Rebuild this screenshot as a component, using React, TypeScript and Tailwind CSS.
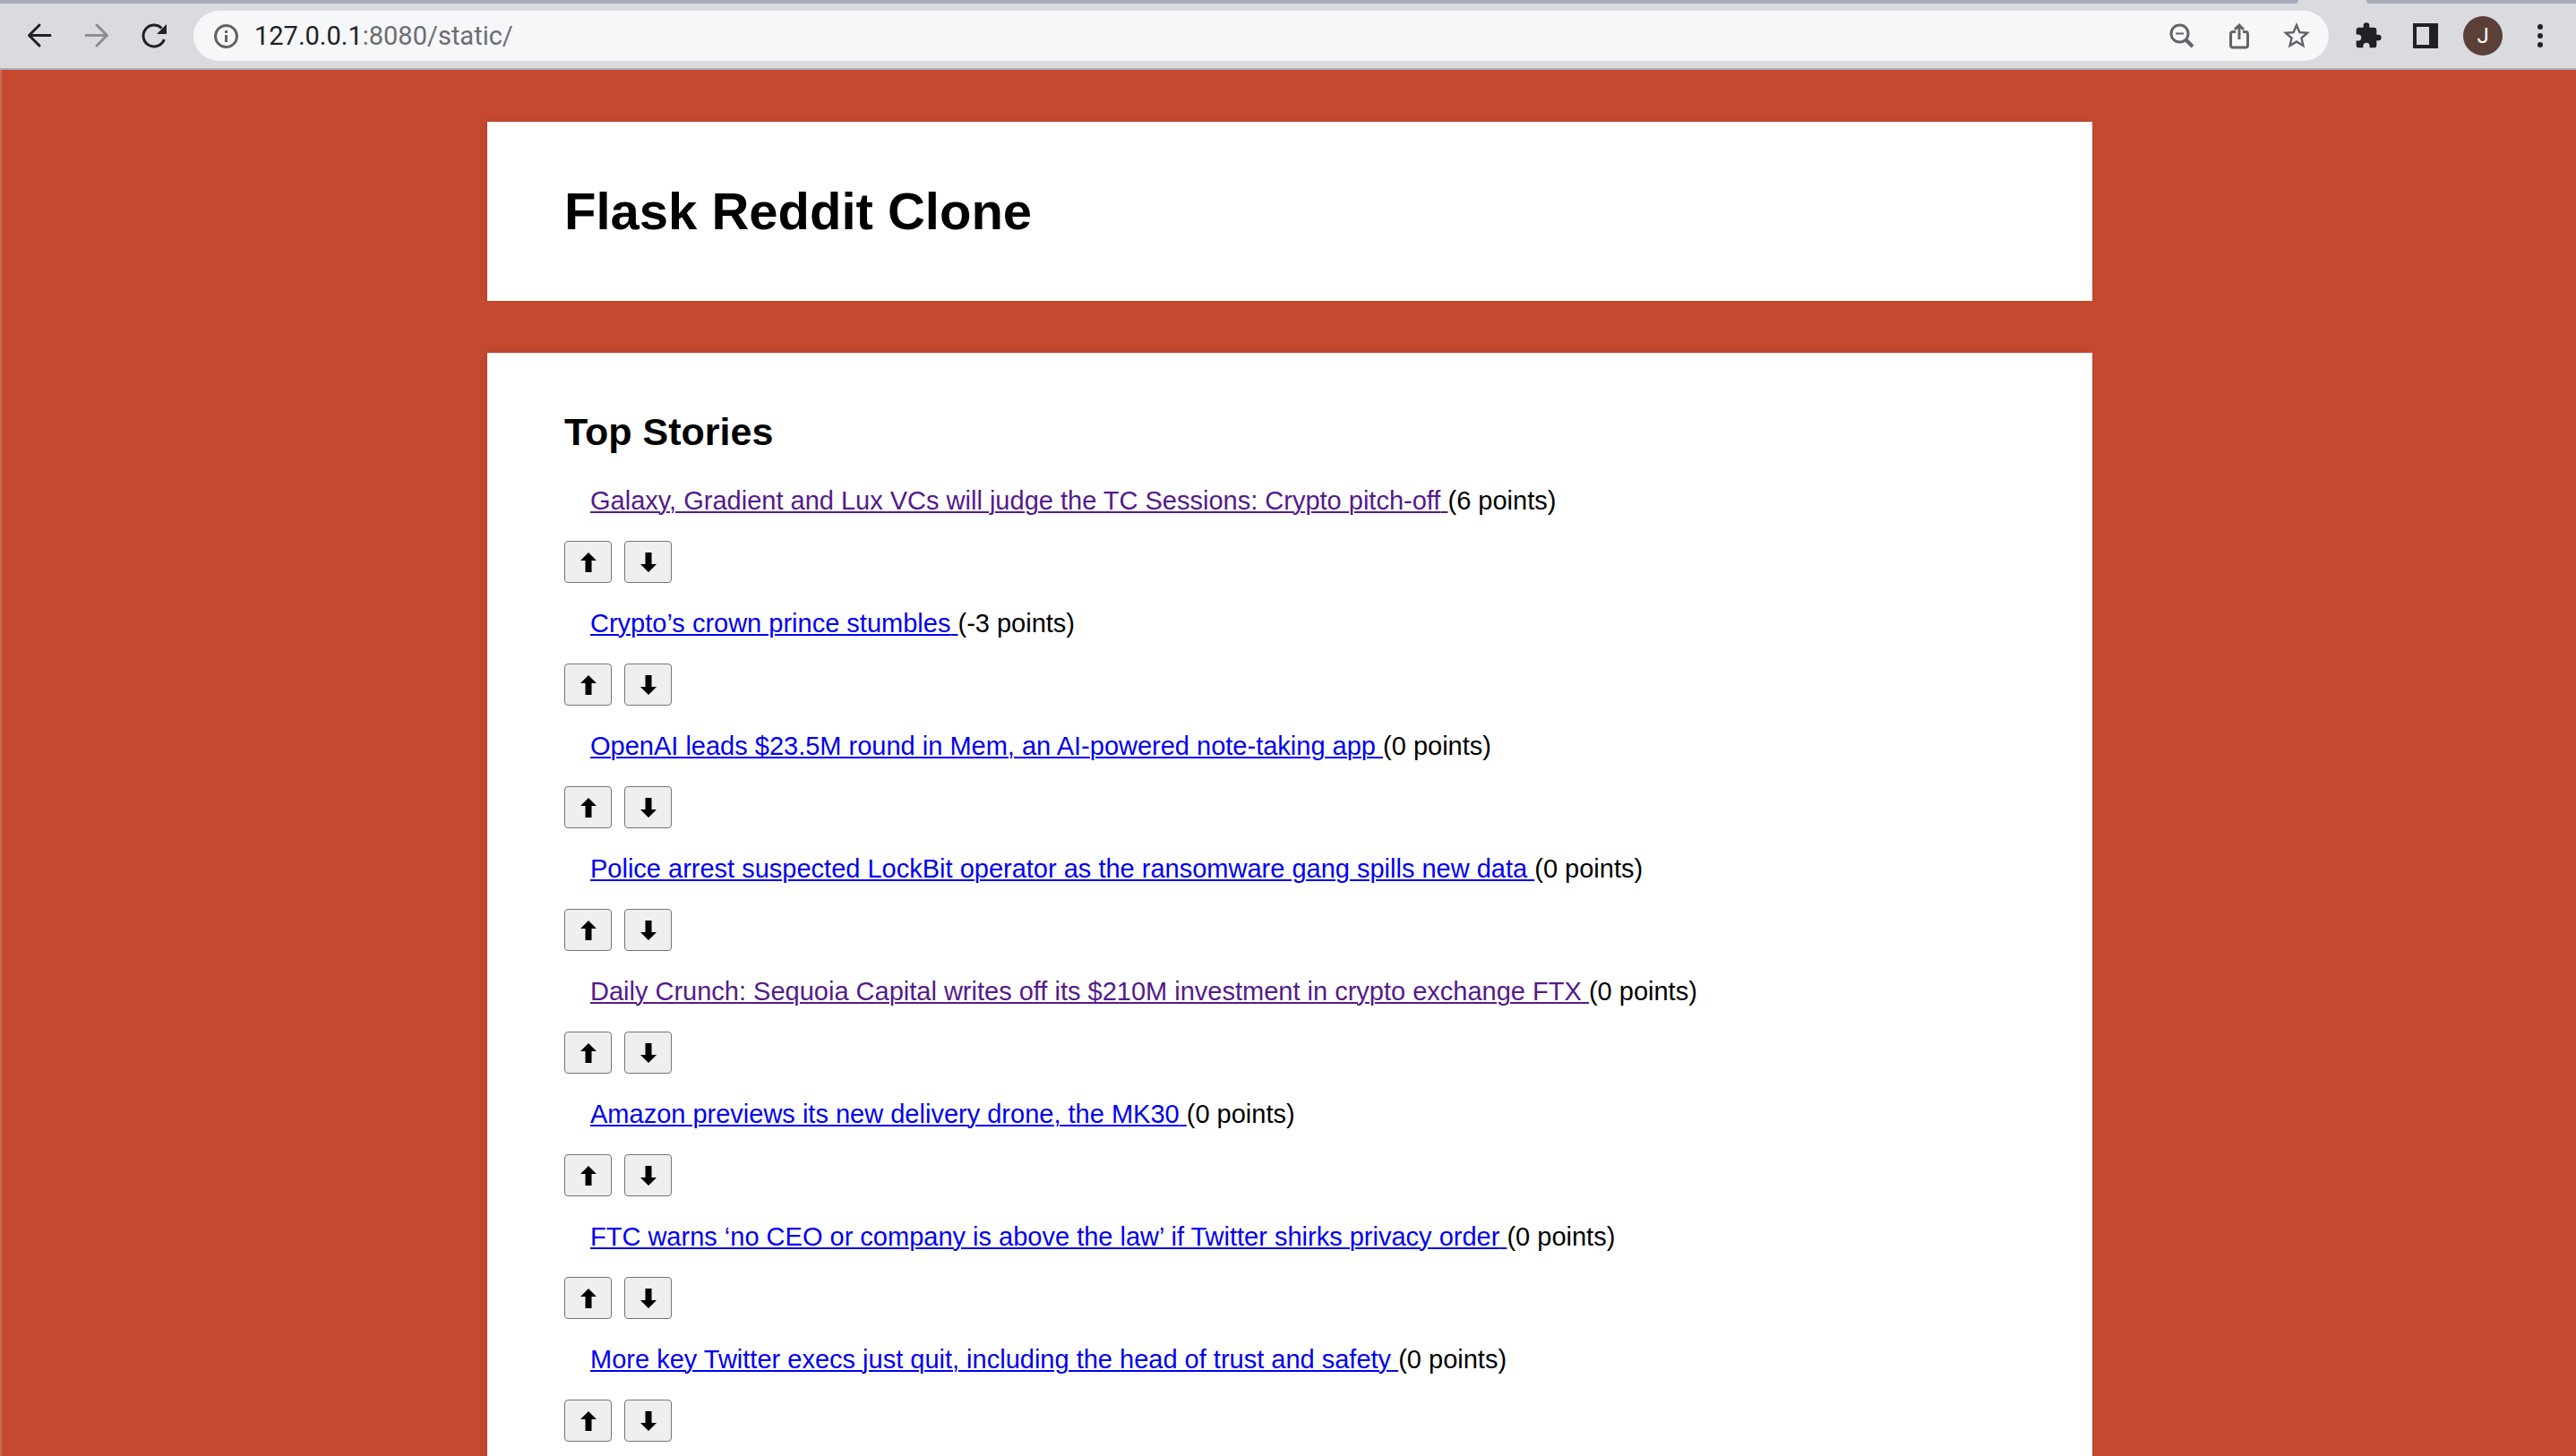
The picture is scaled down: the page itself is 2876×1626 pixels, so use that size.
import React from "react";

type Story = { title: string; points: number; visited?: boolean };

const stories: Story[] = [
  { title: "Galaxy, Gradient and Lux VCs will judge the TC Sessions: Crypto pitch-off", points: 6, visited: true },
  { title: "Crypto’s crown prince stumbles", points: -3 },
  { title: "OpenAI leads $23.5M round in Mem, an AI-powered note-taking app", points: 0 },
  { title: "Police arrest suspected LockBit operator as the ransomware gang spills new data", points: 0 },
  { title: "Daily Crunch: Sequoia Capital writes off its $210M investment in crypto exchange FTX", points: 0, visited: true },
  { title: "Amazon previews its new delivery drone, the MK30", points: 0 },
  { title: "FTC warns ‘no CEO or company is above the law’ if Twitter shirks privacy order", points: 0 },
  { title: "More key Twitter execs just quit, including the head of trust and safety", points: 0 },
];

function IconButton({ label, children }: { label: string; children: React.ReactNode }) {
  return (
    <button type="button" aria-label={label} className="flex size-10 shrink-0 items-center justify-center">
      {children}
    </button>
  );
}

function BrowserBar() {
  return (
    <header className="border-b-2 border-[#abadb5] bg-[#dadbdf] font-[Roboto,sans-serif]">
      <div className="flex h-1">
        <div className="flex-1 rounded-br-xl bg-[#a8abb8]" />
        <div className="w-[76px]" />
        <div className="w-[234px] rounded-bl-xl bg-[#a8abb8]" />
      </div>
      <div className="flex h-18 items-center pr-5 pl-6">
        <div className="flex gap-6">
          <IconButton label="Back">
            <svg viewBox="0 0 40 40" className="size-10" fill="none" stroke="#1f2125" strokeWidth="3">
              <path d="M32 19.500H8.500M20 8L8.500 19.500L20 31" strokeLinecap="round" strokeLinejoin="round" />
            </svg>
          </IconButton>
          <IconButton label="Forward">
            <svg viewBox="0 0 40 40" className="size-10" fill="none" stroke="#8c8e93" strokeWidth="3">
              <path d="M8 19.500H31.500M20 8L31.500 19.500L20 31" strokeLinecap="round" strokeLinejoin="round" />
            </svg>
          </IconButton>
          <IconButton label="Reload">
            <svg viewBox="0 0 40 40" className="size-10">
              <path d="M31.300 24A12 12 0 1 1 28.500 11.500" fill="none" stroke="#1f2125" strokeWidth="3" />
              <path d="M34 7V18H23Z" fill="#1f2125" />
            </svg>
          </IconButton>
        </div>
        <div className="ml-6 flex h-14 flex-1 items-center rounded-full bg-[#f6f7f9] pr-4 pl-4">
          <IconButton label="Site information">
            <svg viewBox="0 0 40 40" className="size-10" fill="none" stroke="#606367" strokeWidth="3">
              <circle cx="20.500" cy="20.500" r="12" />
              <path d="M20.500 19V27M20.500 14V17" />
            </svg>
          </IconButton>
          <div className="ml-3 flex-1 text-[29px] leading-10 text-[#6b6e72]">
            <span className="text-[#1f2125]">127.0.0.1</span>:8080/static/
          </div>
          <div className="flex gap-6">
            <IconButton label="Zoom">
              <svg viewBox="0 0 40 40" className="size-10" fill="none" stroke="#606367" strokeWidth="3">
                <circle cx="17.500" cy="17.500" r="9.500" />
                <path d="M13 17.500H22" strokeWidth="2" />
                <path d="M24 24L32 32" strokeWidth="4" />
              </svg>
            </IconButton>
            <IconButton label="Share">
              <svg viewBox="0 0 40 40" className="size-10" fill="none" stroke="#606367" strokeWidth="3">
                <path d="M16 15.500H13Q10.500 15.500 10.500 18V30.500Q10.500 33 13 33H27Q29.500 33 29.500 30.500V18Q29.500 15.500 27 15.500H24" />
                <path d="M20 24V8.500M15 13L20 8L25 13" />
              </svg>
            </IconButton>
            <IconButton label="Bookmark">
              <svg viewBox="0 0 24 24" className="size-9" fill="#606367">
                <path d="M22 9.240l-7.190-.62L12 2 9.190 8.630 2 9.240l5.460 4.730L5.820 21 12 17.270 18.180 21l-1.630-7.030L22 9.240zM12 15.400l-3.760 2.270 1-4.280-3.320-2.880 4.380-.38L12 6.100l1.710 4.040 4.380.38-3.320 2.880 1 4.280L12 15.400z" />
              </svg>
            </IconButton>
          </div>
        </div>
        <div className="ml-6 flex gap-6">
          <IconButton label="Extensions">
            <svg viewBox="0 0 24 24" className="size-8" fill="#1f2125">
              <path d="M20.500 11H19V7c0-1.100-.9-2-2-2h-4V3.500a2.500 2.500 0 0 0-5 0V5H4c-1.100 0-2 .9-2 2v3.800h1.500a2.700 2.700 0 0 1 0 5.400H2V20c0 1.100.9 2 2 2h3.800v-1.500a2.700 2.700 0 0 1 5.400 0V22H17c1.100 0 2-.9 2-2v-4h1.500a2.500 2.500 0 0 0 0-5z" />
            </svg>
          </IconButton>
          <IconButton label="Side panel">
            <span className="block size-7 border-4 border-r-10 border-[#1f2125]" />
          </IconButton>
          <IconButton label="Profile">
            <span className="flex size-11 shrink-0 items-center justify-center rounded-full bg-[#5b4037] text-2xl text-white">J</span>
          </IconButton>
          <IconButton label="Menu">
            <svg viewBox="0 0 40 40" className="size-10" fill="#1f2125">
              <circle cx="20" cy="10" r="3" />
              <circle cx="20" cy="20" r="3" />
              <circle cx="20" cy="30" r="3" />
            </svg>
          </IconButton>
        </div>
      </div>
    </header>
  );
}

function VoteButton({ label, down }: { label: string; down?: boolean }) {
  return (
    <button type="button" aria-label={label} className="flex h-[47px] w-[53px] items-center justify-center rounded-sm border border-[#767676] bg-[#efefef]">
      <svg viewBox="0 0 18 22" className={down ? "h-[22px] w-[18px] rotate-180" : "h-[22px] w-[18px]"}>
        <path d="M9 0L18 9H12.500V22H5.500V9H0Z" fill="#000" />
      </svg>
    </button>
  );
}

function StoryItem({ story }: { story: Story }) {
  return (
    <li className="flex flex-col gap-[29px]">
      <p className="px-[29px] text-[29px] leading-[32px]">
        <a
          href="#"
          className={
            story.visited
              ? "text-[#551a8b] underline decoration-2 underline-offset-2"
              : "text-[#0000ee] underline decoration-2 underline-offset-2"
          }
        >
          {story.title}{" "}
        </a>
        ({story.points} points)
      </p>
      <div className="flex gap-[14px]">
        <VoteButton label="Upvote" />
        <VoteButton label="Downvote" down />
      </div>
    </li>
  );
}

export default function App() {
  return (
    <div className="flex h-screen flex-col overflow-hidden bg-[#c5492f] font-['Liberation_Sans',Arial,sans-serif] text-black">
      <BrowserBar />
      <main className="min-h-0 flex-1 overflow-hidden border-l-2 border-[#cd6a55] py-[58px] pl-0.5">
        <div className="mx-auto flex w-full max-w-[1792px] flex-col gap-[58px]">
          <section className="bg-white px-[86px] py-[67px] shadow-[-4px_-4px_8px_rgba(0,0,0,0.06)]">
            <h1 className="text-[58px] leading-[66px] font-bold">Flask Reddit Clone</h1>
          </section>
          <section className="bg-white px-[86px] py-[64px] shadow-[-4px_-4px_8px_rgba(0,0,0,0.06)]">
            <h2 className="text-[43px] leading-[49px] font-bold">Top Stories</h2>
            <ul className="mt-[36px] flex flex-col gap-[29px]">
              {stories.map((story) => (
                <StoryItem key={story.title} story={story} />
              ))}
            </ul>
          </section>
        </div>
      </main>
    </div>
  );
}
